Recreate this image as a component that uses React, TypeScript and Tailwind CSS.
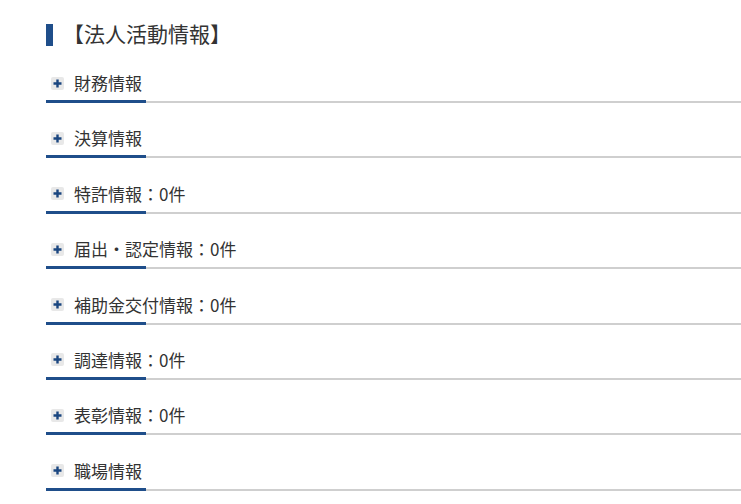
const items = [
  "財務情報",
  "決算情報",
  "特許情報：0件",
  "届出・認定情報：0件",
  "補助金交付情報：0件",
  "調達情報：0件",
  "表彰情報：0件",
  "職場情報",
];

function PlusBox() {
  return (
    <span className="flex h-[13px] w-[13px] items-center justify-center rounded-[2px] bg-[#e8e8e8]">
      <svg width="9" height="9" viewBox="0 0 9 9">
        <path d="M4.5 0.5v8M0.5 4.5h8" stroke="#1a4680" strokeWidth="2.4" />
      </svg>
    </span>
  );
}

export default function App() {
  return (
    <div
      className="min-h-screen bg-white pl-[46px] pt-[18px] text-[#333]"
      style={{ fontFamily: '"Noto Sans CJK JP", "Noto Sans", sans-serif' }}
    >
      {/* heading */}
      <div className="flex h-[30px] items-center">
        <span className="mt-[3px] h-[22px] w-[7px] bg-[#1f4e8a]" />
        <h2 className="ml-[10px] text-[21px] leading-[30px] font-normal">【法人活動情報】</h2>
      </div>

      <div className="mt-[23px]">
        {items.map((label, i) => (
          <div key={label} className={i === 0 ? "" : "mt-[23.4px]"}>
            <div className="flex h-[24px] items-center pl-[5px]">
              <PlusBox />
              <span className="ml-[10px] text-[17px] leading-[24px]">{label}</span>
            </div>
            <div className="mt-[5px] flex items-end">
              <span className="h-[3px] w-[100px] bg-[#1f4e8a]" />
              <span className="h-[2px] flex-1 bg-[#cfcfcf]" />
            </div>
          </div>
        ))}
      </div>
    </div>
  );
}
